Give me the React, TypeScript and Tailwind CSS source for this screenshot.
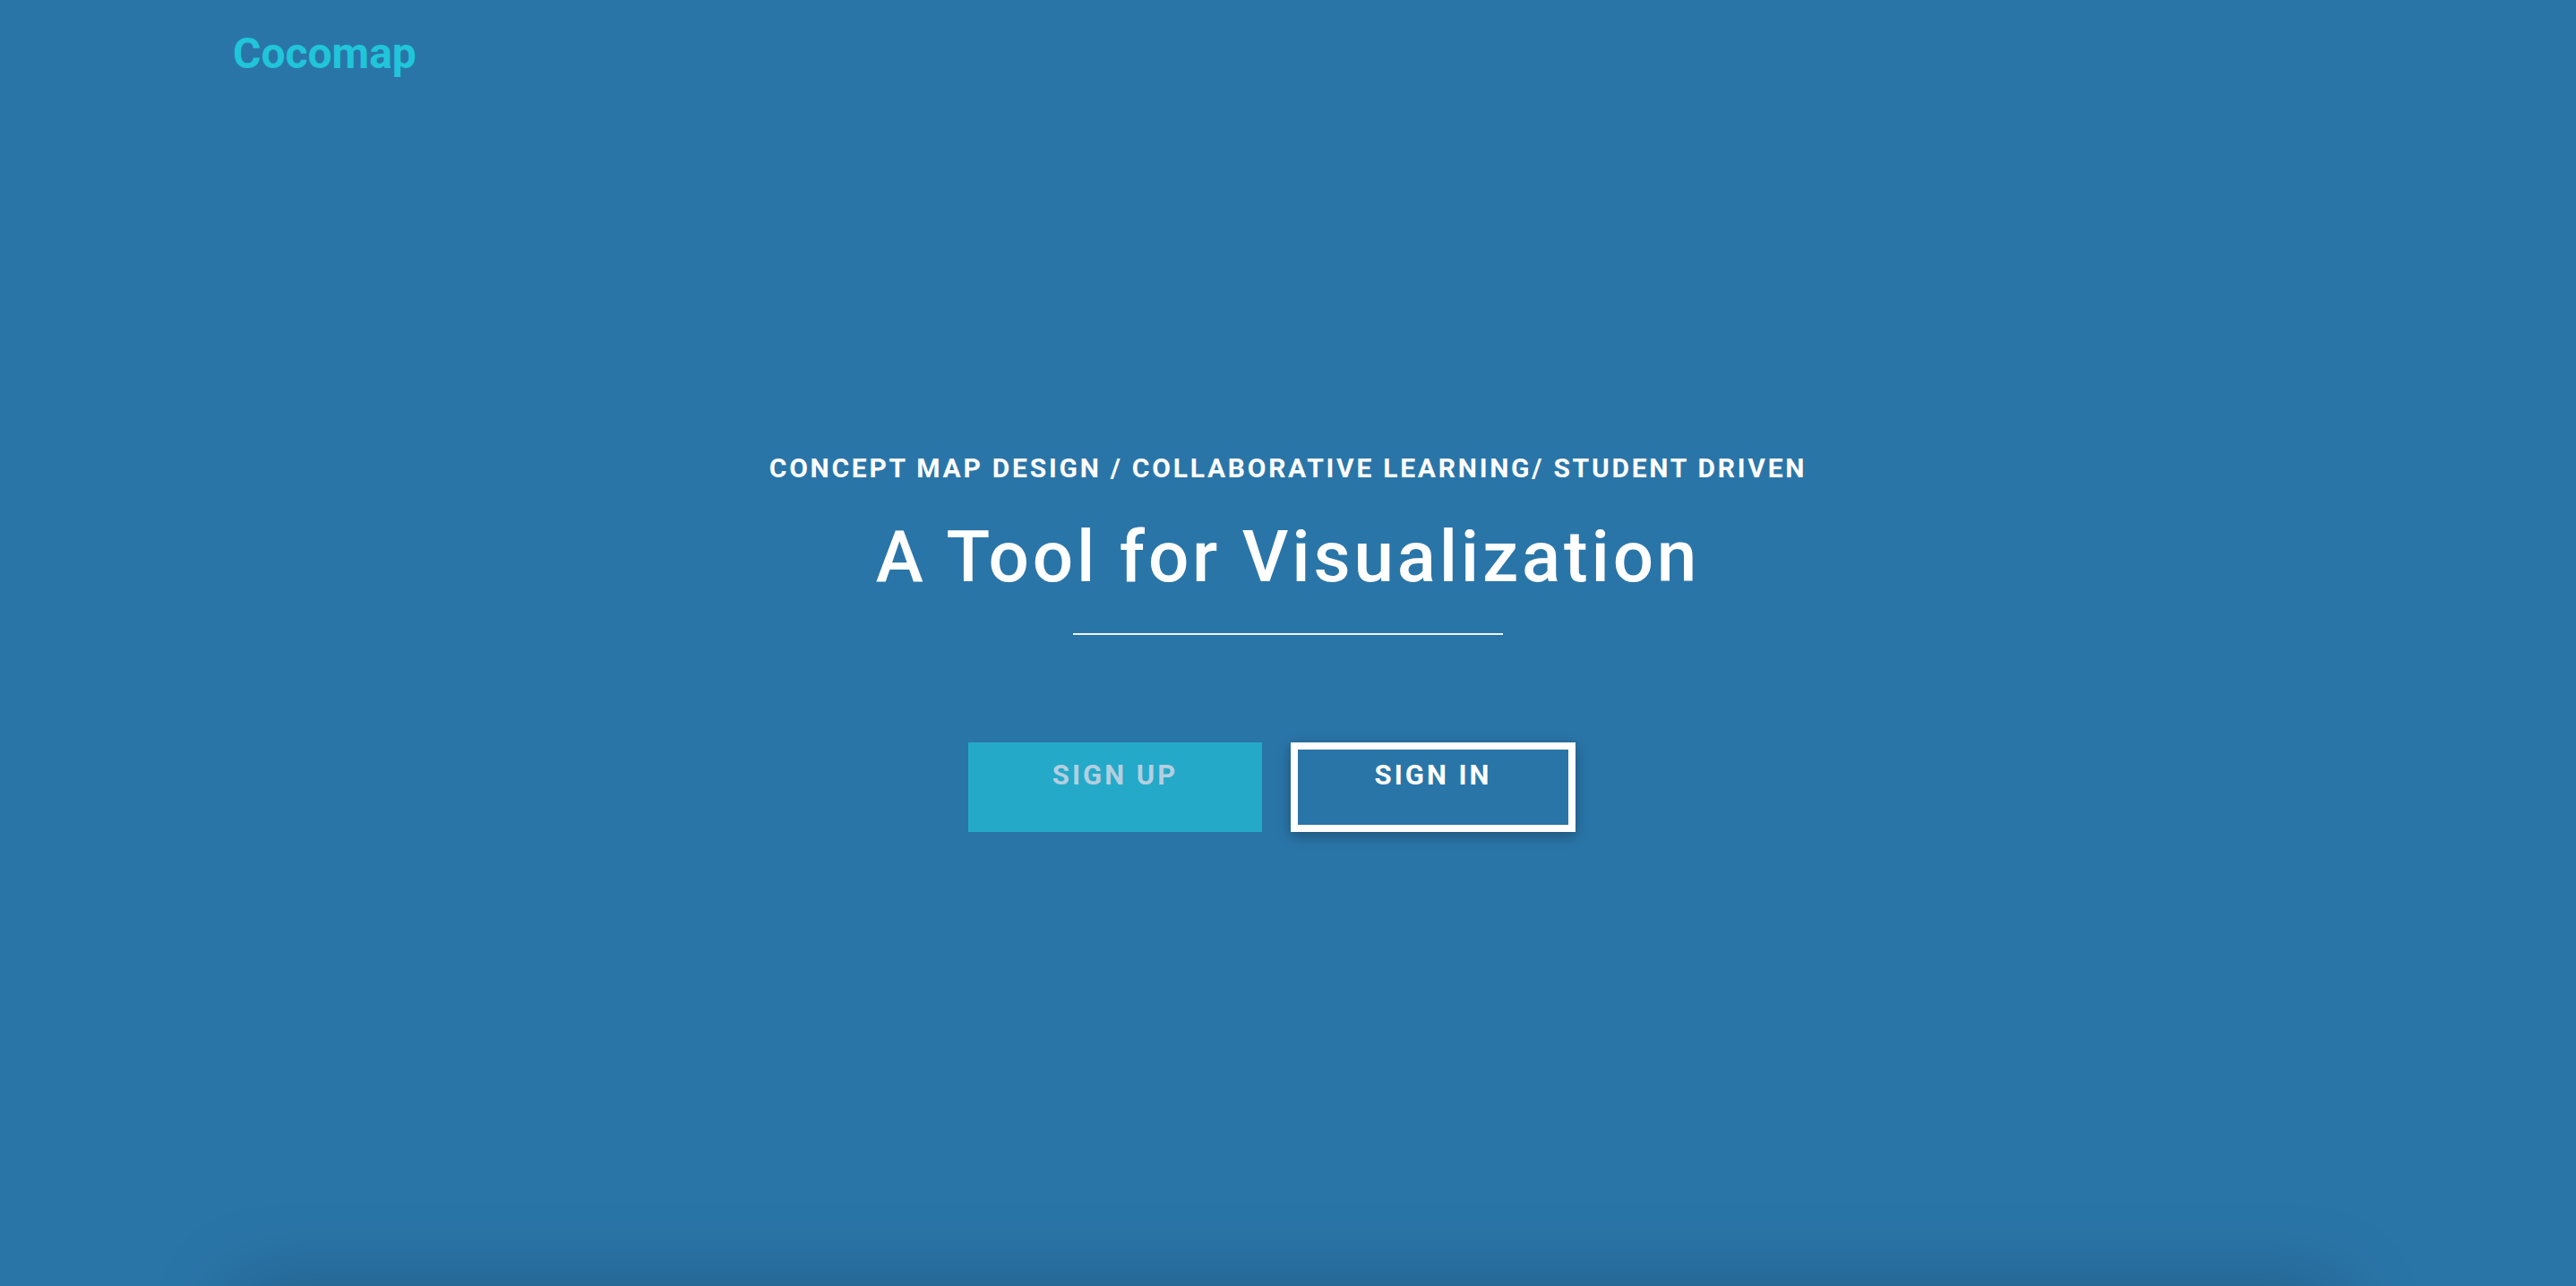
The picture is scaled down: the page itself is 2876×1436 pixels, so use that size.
export default function App() {
    return (
        <div
            className="h-[1436px] overflow-hidden bg-[#2a75a8]"
            style={{ fontFamily: 'Roboto, "Liberation Sans", sans-serif' }}
        >
            <section className="h-[1436px] flex flex-col">
                <header className="px-[260px] pt-[32px]">
                    <a className="text-[48px] leading-[56px] font-bold text-[#20c5d9]">Cocomap</a>
                </header>

                <div className="flex flex-col items-center pt-[417px] text-white">
                    <p className="text-[30px] leading-[36px] font-bold tracking-[2.75px]">
                        CONCEPT MAP DESIGN / COLLABORATIVE LEARNING/ STUDENT DRIVEN
                    </p>
                    <h1 className="mt-[33px] text-[80px] leading-[96px] font-medium tracking-[3.8px]">
                        A Tool for Visualization
                    </h1>
                    <hr className="mt-[37px] w-[480px] border-0 h-[2px] bg-[#eef4f8]" />

                    <div className="mt-[120px] flex gap-[32px] pr-[36px]">
                        <button className="w-[328px] h-[100px] pt-[18px] flex justify-center items-start bg-[#25a9c8] text-[31px] leading-[37px] font-bold tracking-[3px] text-[#b4cfe0]">
                            SIGN UP
                        </button>
                        <button className="w-[318px] h-[100px] pt-[10px] flex justify-center items-start border-[8px] border-white text-[31px] leading-[37px] font-bold tracking-[3px] text-white shadow-[0_4px_14px_rgba(0,0,0,0.3)]">
                            SIGN IN
                        </button>
                    </div>
                </div>
            </section>

            <section className="mx-[260px] h-[400px] bg-[#2a75a8] shadow-[0_0_90px_rgba(0,0,0,0.2)]" />
        </div>
    );
}
